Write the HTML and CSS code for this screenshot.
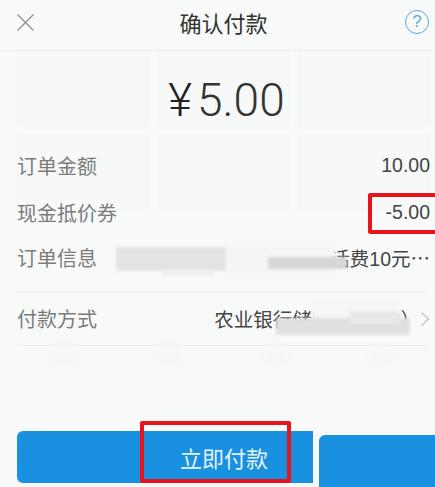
FILE: index.html
```html
<!DOCTYPE html>
<html lang="zh-CN">
<head>
    <meta charset="UTF-8">
    <meta name="viewport" content="width=device-width, initial-scale=1.0">
    <title>确认付款</title>
    <link rel="stylesheet" href="styles.css">
</head>
<body>
    <div class="page">
        <!-- Faint page showing through behind the sheet -->
        <div class="ghost-cards">
            <div class="ghost-card"></div>
            <div class="ghost-card"></div>
            <div class="ghost-card"></div>
            <div class="ghost-card"></div>
            <div class="ghost-card"></div>
            <div class="ghost-card"></div>
        </div>
        <div class="ghost-icons">
            <div class="ghost-icon"></div>
            <div class="ghost-icon"></div>
            <div class="ghost-icon"></div>
            <div class="ghost-icon"></div>
        </div>

        <div class="header">
            <svg class="close-icon" viewBox="0 0 17 17" width="17" height="17">
                <path d="M0.5 0.5 L16.5 16.5 M16.5 0.5 L0.5 16.5" fill="none" stroke="#8f9191" stroke-width="1.3"/>
            </svg>
            <h1>确认付款</h1>
            <div class="help-icon">?</div>
        </div>

        <div class="amount"><span class="currency">¥</span>5.00</div>

        <div class="rows">
            <div class="row row-first">
                <span class="label">订单金额</span>
                <span class="value">10.00</span>
            </div>
            <div class="row row-coupon">
                <span class="label">现金抵价券</span>
                <span class="value">-5.00</span>
            </div>
            <div class="row row-info">
                <span class="label">订单信息</span>
                <span class="value">手机话费10元⋯</span>
            </div>
            <div class="row row-pay">
                <span class="label">付款方式</span>
                <span class="value">农业银行储蓄卡（****）</span>
                <svg class="chevron" viewBox="0 0 10 16" width="10" height="16">
                    <path d="M1.5 1.5 L8.5 8 L1.5 14.5" fill="none" stroke="#c4c6c6" stroke-width="1.5"/>
                </svg>
            </div>
        </div>

        <div class="buttons">
            <button class="pay-button">立即付款</button>
            <div class="next-button"></div>
        </div>

        <!-- Mosaic smudges over the private details -->
        <div class="smudge smudge-info-3"></div>
        <div class="smudge smudge-info-1"></div>
        <div class="smudge smudge-info-2"></div>
        <div class="smudge smudge-info-4"></div>
        <div class="smudge smudge-pay-2"></div>
        <div class="smudge smudge-pay-1"></div>
        <div class="smudge smudge-pay-3"></div>

        <!-- Red annotation boxes -->
        <div class="mark mark-coupon"></div>
        <div class="mark mark-button"></div>
    </div>
</body>
</html>
```

FILE: styles.css
```css
* {
    box-sizing: border-box;
}
body {
    margin: 0;
    padding: 0;
    font-family: "Liberation Sans", "Noto Sans CJK SC", sans-serif;
    background-color: #f8f9f8;
}
.page {
    position: relative;
    width: 435px;
    height: 487px;
    overflow: hidden;
    background-color: #f8faf9;
}
.ghost-cards {
    position: absolute;
    left: 17px;
    top: 50px;
    width: 413px;
    display: grid;
    grid-template-columns: repeat(3, 1fr);
    grid-auto-rows: 75px;
    gap: 10px;
}
.ghost-card {
    border: 1px solid #f5f7f6;
    background-color: #f7f9f8;
}
.ghost-icons {
    position: absolute;
    left: 52px;
    top: 342px;
    width: 342px;
    display: flex;
    justify-content: space-between;
}
.ghost-icon {
    width: 26px;
    height: 24px;
    border-radius: 6px;
    background-color: #f6f8f7;
    filter: blur(2px);
}
.header {
    position: relative;
    height: 51px;
    display: flex;
    align-items: center;
    justify-content: space-between;
    padding: 0 6px 6px 17px;
    border-bottom: 1px solid #eceeed;
}
.header h1 {
    margin: 0 0 0 8px;
    font-size: 22px;
    font-weight: 400;
    color: #333;
}
.help-icon {
    width: 24px;
    height: 24px;
    border: 1.5px solid #5aa9d6;
    border-radius: 50%;
    color: #5aa9d6;
    font-size: 17px;
    line-height: 21px;
    text-align: center;
}
.amount {
    position: relative;
    height: 99px;
    padding: 20px 0 0 18px;
    text-align: center;
    font-family: Roboto, sans-serif;
    font-weight: 300;
    font-size: 46px;
    line-height: 58px;
    color: #333;
}
.currency {
    margin-right: 5px;
    color: #222;
}
.rows {
    position: relative;
    padding: 0 5px 0 17px;
}
.row {
    display: flex;
    align-items: center;
    justify-content: space-between;
    font-size: 19.5px;
}
.row-first {
    height: 30px;
}
.row-coupon {
    height: 46px;
    margin-top: 9px;
}
.row-info {
    height: 57px;
    padding-bottom: 12px;
    border-bottom: 1px solid #eef0ef;
}
.row-pay {
    height: 54px;
    border-bottom: 1px solid #eef0ef;
}
.label {
    color: #7a7c7c;
    font-size: 20px;
}
.value {
    color: #444;
}
.row-pay .value {
    margin-left: auto;
}
.buttons {
    position: absolute;
    left: 17px;
    right: 0;
    bottom: 0;
    display: flex;
    align-items: flex-end;
    gap: 6px;
}
.pay-button {
    width: 296px;
    height: 52px;
    margin-bottom: 4px;
    padding: 0 0 0 118px;
    background-color: #1a90e0;
    color: #e6f3fb;
    border: none;
    border-radius: 6px 0 0 6px;
    font-family: inherit;
    font-size: 22px;
}
.next-button {
    flex: 1;
    height: 52px;
    background-color: #1a90e0;
    border-radius: 6px 0 0 0;
}
.smudge {
    position: absolute;
    background-color: #dcdddd;
    filter: blur(1.5px);
}
.smudge-info-1 {
    left: 116px;
    top: 247px;
    width: 110px;
    height: 24px;
    background-color: #e2e3e3;
}
.smudge-info-2 {
    left: 163px;
    top: 270px;
    width: 50px;
    height: 6px;
    background-color: #edeeee;
}
.smudge-info-3 {
    left: 226px;
    top: 246px;
    width: 110px;
    height: 27px;
    background-color: #f4f5f5;
}
.smudge-info-4 {
    left: 268px;
    top: 257px;
    width: 79px;
    height: 12px;
    background-color: #d6d7d7;
}
.smudge-pay-1 {
    left: 276px;
    top: 318px;
    width: 134px;
    height: 17px;
    background-color: #dfe0e0;
}
.smudge-pay-2 {
    left: 312px;
    top: 301px;
    width: 88px;
    height: 22px;
    background-color: #f5f6f6;
}
.smudge-pay-3 {
    left: 350px;
    top: 311px;
    width: 50px;
    height: 13px;
    background-color: #e8e9e9;
}
.mark {
    position: absolute;
    border: 4px solid #e8141c;
    border-radius: 2px;
}
.mark-coupon {
    left: 368px;
    top: 193px;
    width: 71px;
    height: 41px;
}
.mark-button {
    left: 140px;
    top: 421px;
    width: 151px;
    height: 62px;
}
```
